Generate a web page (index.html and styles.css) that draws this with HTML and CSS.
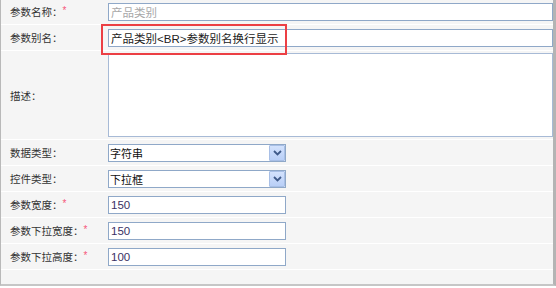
FILE: index.html
```
<!DOCTYPE html>
<html lang="zh-CN">
<head>
    <meta charset="UTF-8">
    <title>参数编辑</title>
    <link rel="stylesheet" href="styles.css">
</head>
<body>

    <div class="form-wrap">
        <table class="form-table">
            <tr>
                <th>参数名称：<em>*</em></th>
                <td><input class="txt wide readonly" type="text" value="产品类别" readonly></td>
            </tr>
            <tr>
                <th>参数别名：</th>
                <td><input class="txt wide" type="text" value="产品类别<BR>参数别名换行显示"></td>
            </tr>
            <tr class="tall">
                <th>描述：</th>
                <td><textarea class="area"></textarea></td>
            </tr>
            <tr>
                <th>数据类型：</th>
                <td>
                    <div class="sel">
                        <select><option>字符串</option></select>
                        <span class="sel-btn"><svg width="9" height="6" viewBox="0 0 9 6"><path d="M1 1 L4.5 4.5 L8 1" fill="none" stroke="#3f5a8a" stroke-width="1.8"/></svg></span>
                    </div>
                </td>
            </tr>
            <tr>
                <th>控件类型：</th>
                <td>
                    <div class="sel">
                        <select><option>下拉框</option></select>
                        <span class="sel-btn"><svg width="9" height="6" viewBox="0 0 9 6"><path d="M1 1 L4.5 4.5 L8 1" fill="none" stroke="#3f5a8a" stroke-width="1.8"/></svg></span>
                    </div>
                </td>
            </tr>
            <tr>
                <th>参数宽度：<em>*</em></th>
                <td><input class="txt short" type="text" value="150"></td>
            </tr>
            <tr>
                <th>参数下拉宽度：<em>*</em></th>
                <td><input class="txt short" type="text" value="150"></td>
            </tr>
            <tr>
                <th>参数下拉高度：<em>*</em></th>
                <td><input class="txt short" type="text" value="100"></td>
            </tr>
        </table>
        <div class="form-foot"></div>

        <!-- annotation box around the alias field -->
        <div class="mark"></div>
    </div>

</body>
</html>
```

FILE: styles.css
```
body {
    margin: 0;
    font-family: "Noto Sans CJK SC", sans-serif;
    font-size: 10.5px;
    color: #333;
    background: #fff;
}
.form-wrap {
    position: relative;
    width: 552px;
    margin-top: -1px;
    border-left: 1px solid #b9b9b9;
    border-right: 3px solid #b4b4b4;
    border-bottom: 2px solid #c6c6c6;
}
.form-table {
    width: 100%;
    border-collapse: collapse;
}
.form-table th,
.form-table td {
    background: #f5f5f5;
    border-bottom: 1px solid #fff;
    height: 25px;
    padding: 0;
    vertical-align: middle;
}
.form-table th {
    width: 93px;
    padding-left: 9px;
    text-align: left;
    font-weight: normal;
    white-space: nowrap;
}
.form-table td {
    padding-left: 5px;
}
.form-table tr.tall td,
.form-table tr.tall th {
    height: 88px;
}
th em {
    font-style: normal;
    color: #f5587a;
    font-family: "Liberation Sans", sans-serif;
    font-size: 10px;
    position: relative;
    top: -2px;
}
.txt {
    display: block;
    box-sizing: border-box;
    height: 18px;
    margin: 0;
    padding: 0 2px;
    border: 1px solid #8fa8c8;
    background: #fff;
    font-family: "Liberation Sans", "Noto Sans CJK SC", sans-serif;
    font-size: 11.5px;
    color: #1c1c1c;
    outline: none;
}
.wide {
    width: 100%;
}
.short {
    width: 178px;
    color: #3a3164;
}
.readonly {
    color: #a8a8a8;
}
.area {
    display: block;
    box-sizing: border-box;
    width: 100%;
    height: 84px;
    margin: 0;
    border: 1px solid #a7bad6;
    resize: none;
    outline: none;
}
.sel {
    position: relative;
    width: 178px;
    height: 18px;
}
.sel select {
    appearance: none;
    -webkit-appearance: none;
    box-sizing: border-box;
    width: 100%;
    height: 18px;
    margin: 0;
    padding: 0 0 0 1px;
    border: 1px solid #8fa8c8;
    border-radius: 0;
    background: #fff;
    font-family: "Noto Sans CJK SC", sans-serif;
    font-size: 11px;
    color: #111;
    outline: none;
}
.sel-btn {
    position: absolute;
    top: 1px;
    right: 1px;
    width: 14px;
    height: 14px;
    border: 1px solid #a8bfe6;
    border-radius: 1px;
    background: linear-gradient(#d3e2fd, #b9cff7);
    display: flex;
    align-items: center;
    justify-content: center;
}
.form-foot {
    height: 14px;
    background: #f5f5f5;
}
.mark {
    position: absolute;
    left: 100px;
    top: 25px;
    width: 182px;
    height: 27px;
    border: 2px solid #ec3f44;
    pointer-events: none;
}
```
